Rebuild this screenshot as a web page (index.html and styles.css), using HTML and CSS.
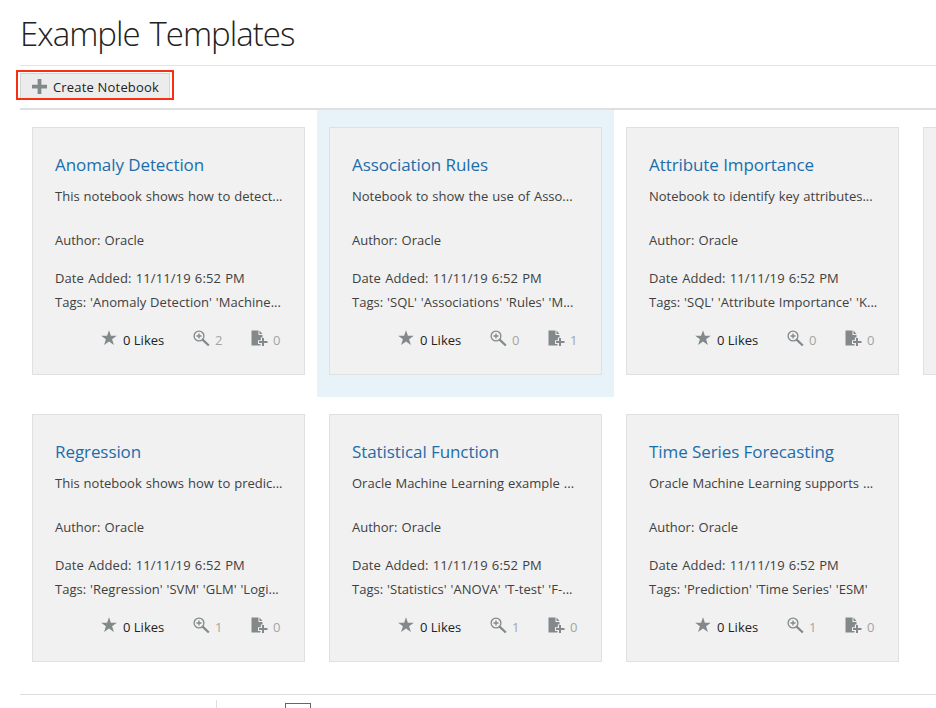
FILE: index.html
```
<!DOCTYPE html>
<html lang="en">
<head>
<meta charset="utf-8">
<title>Example Templates</title>
<link rel="stylesheet" href="styles.css">
</head>
<body>
<svg class="defs" aria-hidden="true">
  <symbol id="star" viewBox="0 0 16 16"><path d="M8 .2l1.900 5.500h5.900l-4.700 3.500 1.800 5.800L8 11.500 3.100 15l1.800-5.800L.2 5.700h5.900z" fill="#83888b"/></symbol>
  <symbol id="view" viewBox="0 0 17 17"><circle cx="6" cy="6" r="4.900" fill="none" stroke="#83888b" stroke-width="1.300"/><path d="M6 3.500v5M3.500 6h5" stroke="#83888b" stroke-width="1.300"/><path d="M9.600 9.600l6.200 5.900" stroke="#83888b" stroke-width="2.200"/></symbol>
  <symbol id="copy" viewBox="0 0 17 17"><path d="M.5.500h7v4.500h4v2.500H9.800v2.800H7v3.700h2.500V15.500h-9z" fill="#83888b"/><path d="M8.500.500l3 3.500h-3z" fill="#83888b"/><path d="M12 8v8M8 12h8.500" stroke="#83888b" stroke-width="2"/></symbol>
</svg>
<h1 class="title"><span>Example Templates</span></h1>
<div class="toolbar">
  <button class="create"><svg class="plus" viewBox="0 0 16 16"><path d="M8 0v16M0 8h16" stroke="#83888b" stroke-width="4"/></svg><span>Create Notebook</span></button>
</div>
<main class="grid" id="grid"></main>
<footer class="pager"><div class="divider"></div><div class="page-box"></div></footer>
<script src="app.js"></script>
</body>
</html>
```
FILE: styles.css
```
* { box-sizing: border-box; }
body { margin: 0; width: 936px; height: 708px; overflow: hidden; background: #fff; color: #404040; font: 13px/20px "Open Sans", "Noto Sans", sans-serif; }
.defs { position: absolute; width: 0; height: 0; }
.title { margin: 0 0 0 20px; height: 66px; padding-top: 12px; border-bottom: 1px solid #e4e4e4; font-size: 33px; font-weight: 300; line-height: 44px; letter-spacing: -.98px; word-spacing: 2.2px; color: #222; }
.toolbar { margin-left: 20px; height: 44px; padding-top: 4px; border-bottom: 2px solid #dfdfdf; }
.create { display: flex; align-items: center; width: 158px; height: 30px; margin-left: -4px; padding: 3px 0 0 14px; gap: 6px; border: 2px solid #f7300f; background: #ececec; box-shadow: inset 2px 1px 0 #fff, inset -2px 0 0 #fff, inset 3px 2px 0 #d2d5d7, inset -3px 0 0 #d2d5d7; font: 13px/20px "Open Sans", "Noto Sans", sans-serif; letter-spacing: .18px; color: #222; white-space: nowrap; }
.plus { width: 15px; height: 15px; flex: none; }
.grid { display: grid; grid-template-columns: repeat(4, 297px); grid-auto-rows: 287px; margin-left: 20px; width: 916px; overflow: hidden; }
.cell { padding: 17px 12px 22px; }
.selected { background: #e7f2f9; }
.card { height: 248px; padding: 25px 0 0 22px; border: 1px solid #e0e0e0; background: #f1f1f1; white-space: nowrap; }
.card h2 { margin: 0; font-size: 17px; line-height: 24px; font-weight: 400; letter-spacing: -.08px; color: #1b6dab; }
.card p { margin: 0; }
.card .desc { margin-top: 9px; word-spacing: .6px; }
.card .author { margin-top: 24px; word-spacing: .8px; }
.card .date { margin-top: 18px; letter-spacing: .1px; word-spacing: .7px; }
.card .tags { margin-top: 4px; letter-spacing: .04px; word-spacing: .4px; }
.stats { display: flex; align-items: flex-start; margin: 18px 0 0 46px; }
.stats svg { width: 17px; height: 17px; flex: none; }
.stats .star { width: 16px; height: 16px; }
.likes { width: 76px; padding-left: 6px; color: #222; }
.count { padding-left: 5px; color: #a4a4a4; }
.views { width: 41px; }
.pager { display: flex; align-items: flex-start; margin: 10px 0 0 20px; height: 14px; border-top: 1px solid #dedede; }
.divider { width: 1px; height: 8px; margin: 5px 0 0 196px; background: #dedede; }
.page-box { width: 26px; height: 26px; margin: 8px 0 0 68px; border: 1px solid #666; }
```
FILE: app.js
```
const items = [
  ["Anomaly Detection", "This notebook shows how to detect...", "'Anomaly Detection' 'Machine...", 2, 0],
  ["Association Rules", "Notebook to show the use of Asso...", "'SQL' 'Associations' 'Rules' 'M...", 0, 1],
  ["Attribute Importance", "Notebook to identify key attributes...", "'SQL' 'Attribute Importance' 'K...", 0, 0],
  null,
  ["Regression", "This notebook shows how to predic...", "'Regression' 'SVM' 'GLM' 'Logi...", 1, 0],
  ["Statistical Function", "Oracle Machine Learning example ...", "'Statistics' 'ANOVA' 'T-test' 'F-...", 1, 0],
  ["Time Series Forecasting", "Oracle Machine Learning supports ...", "'Prediction' 'Time Series' 'ESM'", 1, 0]
];
document.getElementById("grid").innerHTML = items.map((t, i) => {
  const body = t ? `<h2><span>${t[0]}</span></h2><p class="desc"><span>${t[1]}</span></p>
    <p class="author"><span>Author: Oracle</span></p><p class="date"><span>Date Added: 11/11/19 6:52 PM</span></p>
    <p class="tags"><span>Tags: ${t[2]}</span></p>
    <div class="stats"><svg class="star"><use href="#star"/></svg><span class="likes">0 Likes</span><svg><use href="#view"/></svg><span class="count views">${t[3]}</span><svg><use href="#copy"/></svg><span class="count">${t[4]}</span></div>` : "";
  return `<div class="cell${i === 1 ? " selected" : ""}"><article class="card">${body}</article></div>`;
}).join("");
```
